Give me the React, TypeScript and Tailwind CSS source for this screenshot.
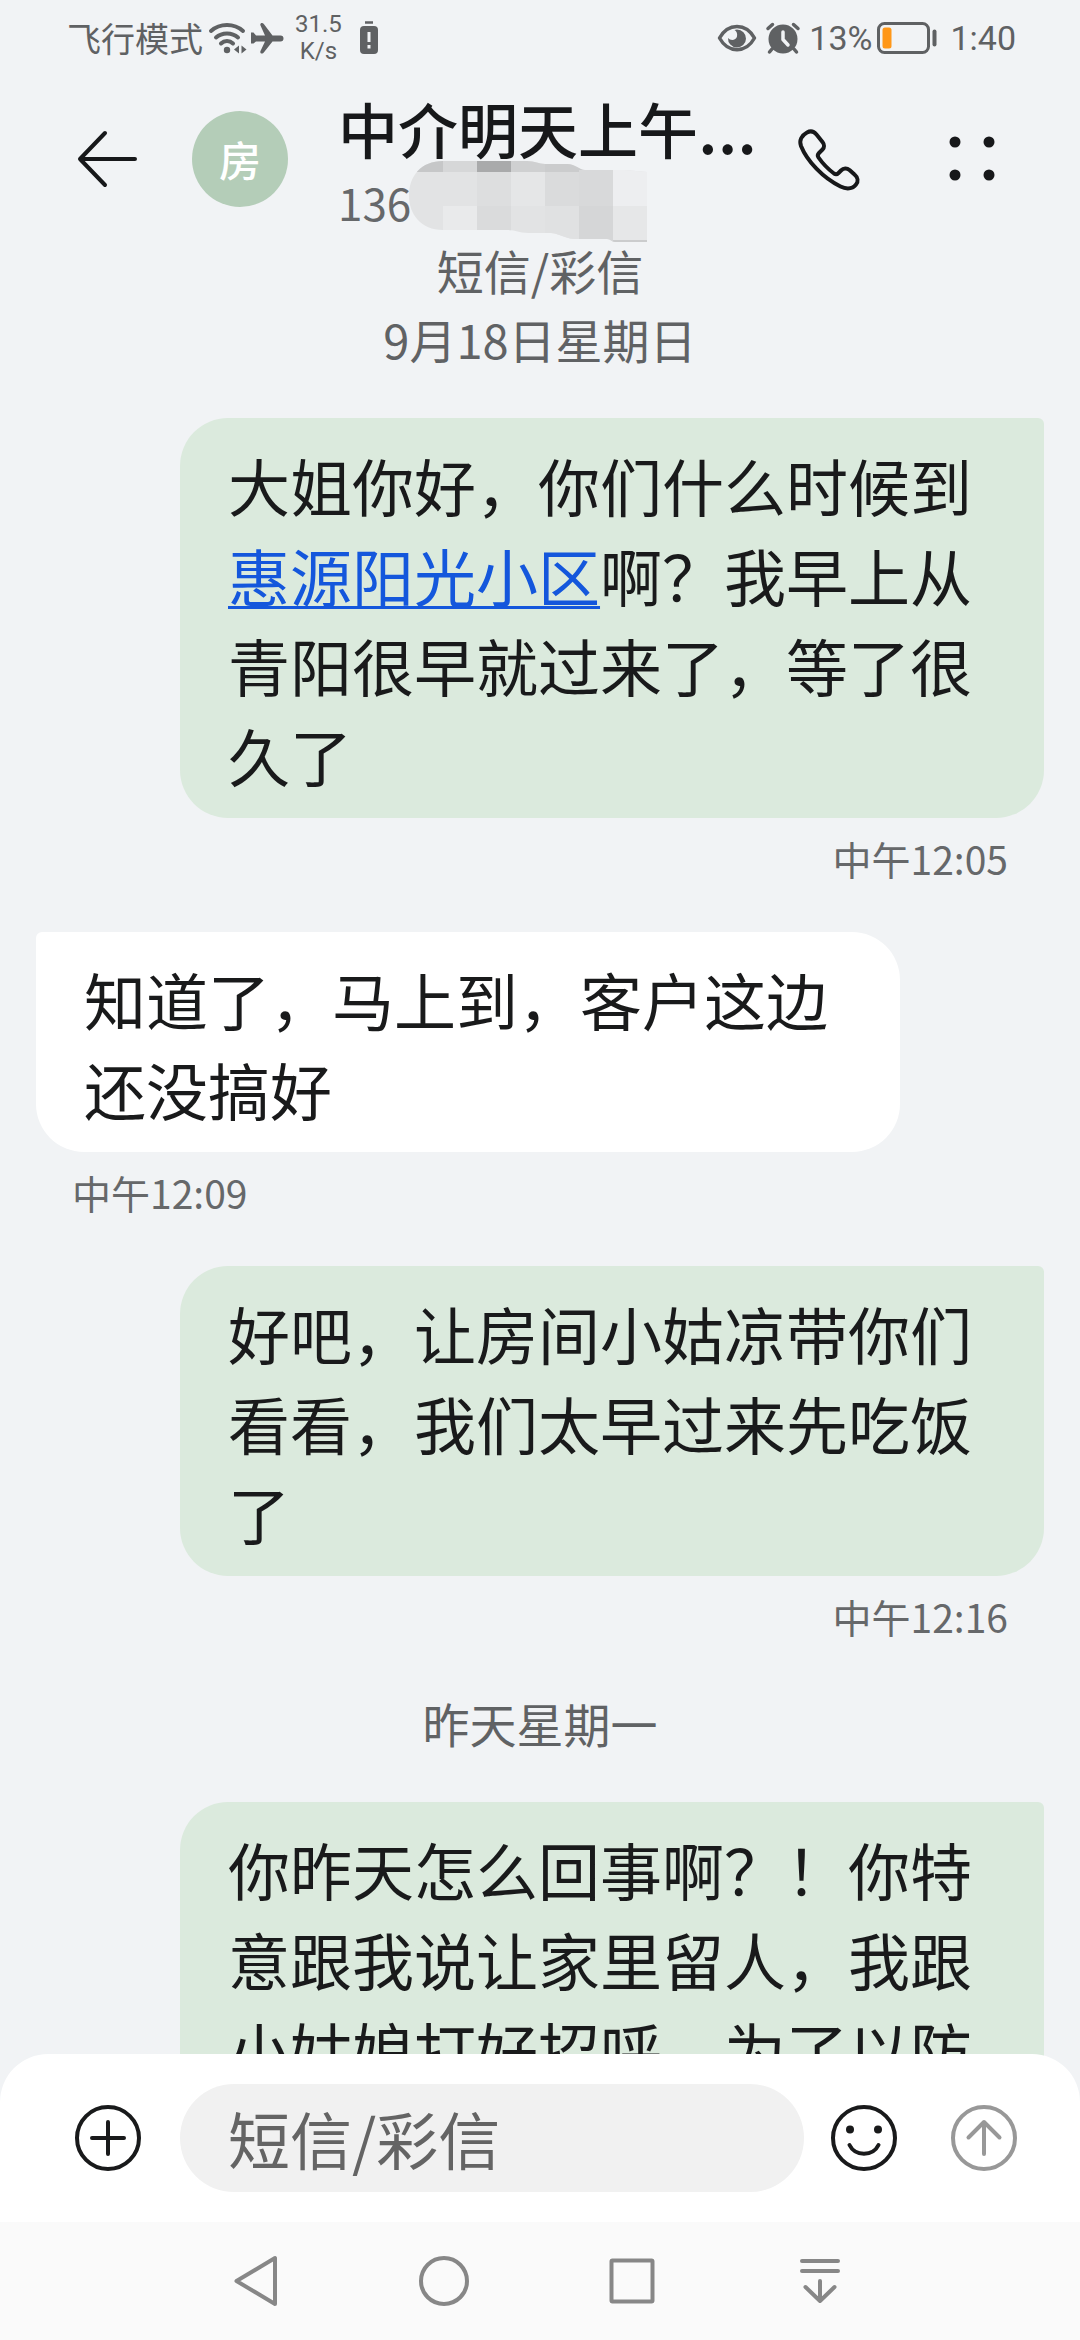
import { useState } from "react";
import type { ReactNode } from "react";

interface Message {
  id: number;
  mine: boolean;
  time?: string;
  body: ReactNode;
}

interface Day {
  label: string;
  messages: Message[];
}

const DAYS: Day[] = [
  {
    label: "9月18日星期日",
    messages: [
      {
        id: 1,
        mine: true,
        time: "中午12:05",
        body: (
          <>
            大姐你好，你们什么时候到
            <a
              href="#map"
              className="text-[#1457dc] underline decoration-[3px] underline-offset-[4px] [text-decoration-skip-ink:none]"
            >
              惠源阳光小区
            </a>
            啊？我早上从青阳很早就过来了，等了很久了
          </>
        ),
      },
      {
        id: 2,
        mine: false,
        time: "中午12:09",
        body: "知道了，马上到，客户这边还没搞好",
      },
      {
        id: 3,
        mine: true,
        time: "中午12:16",
        body: "好吧，让房间小姑凉带你们看看，我们太早过来先吃饭了",
      },
    ],
  },
  {
    label: "昨天星期一",
    messages: [
      {
        id: 4,
        mine: true,
        body: "你昨天怎么回事啊？！你特意跟我说让家里留人，我跟小姑娘打好招呼，为了以防",
      },
    ],
  },
];

function StatusBar() {
  return (
    <div className="flex h-[76px] items-center justify-between pl-[67px] pr-[64px] text-[34px] leading-none text-[#5f6163]">
      <div className="flex items-center">
        <span>飞行模式</span>
        {/* Wi-Fi */}
        <svg className="ml-1 h-[34px] w-[42px]" viewBox="0 0 42 34" fill="none" stroke="currentColor" strokeWidth="4" strokeLinecap="round">
          <path d="M4 10C13 2 27 2 36 10" />
          <path d="M9 16.500C15 11 25 11 31 16.500" />
          <path d="M14 22.500C17.500 19 22.500 19 26 22.500" />
          <circle cx="20" cy="29" r="3.200" fill="currentColor" stroke="none" />
          <path d="M32 24.500v8l-5-4zM34.500 24.500v8l5-4z" fill="currentColor" stroke="none" />
        </svg>
        {/* Airplane */}
        <svg className="h-[34px] w-[36px]" viewBox="0 0 36 34" fill="currentColor">
          <path d="M2 11.500h2.500l2.500 3h9L11.500 4.500C10.500 2 13.500 1 15 3.200L23.500 14.500H31.500a3 3 0 0 1 0 6H23.500L15 31.300C13.500 33.500 10.500 32.500 11.500 30L16 20.500H7l-2.500 2H2z" />
        </svg>
        <span className="ml-2.5 text-center font-[Roboto] text-2xl leading-[27px]">
          31.5
          <br />
          K/s
        </span>
        {/* Low battery alert */}
        <svg className="ml-4.5 h-[34px] w-[18px]" viewBox="0 0 18 34">
          <path d="M5 1.500h8" stroke="currentColor" strokeWidth="2.500" />
          <rect y="5" width="18" height="28" rx="4" fill="currentColor" />
          <path d="M9 11v10M9 24v3.500" stroke="#f1f3f5" strokeWidth="3" />
        </svg>
      </div>
      <div className="flex items-center">
        {/* Eye comfort */}
        <svg className="h-[34px] w-[40px]" viewBox="0 0 40 34" fill="none">
          <path d="M2.500 17C11 1.500 29 1.500 37.500 17C29 32.500 11 32.500 2.500 17Z" stroke="currentColor" strokeWidth="3.500" strokeLinejoin="round" />
          <path d="M20 8.500a9 9 0 1 1-9 8.500c2.500 3 8 2.500 9-1.500c.600-3-.500-5.500-2.500-6.500z" fill="currentColor" />
        </svg>
        {/* Alarm */}
        <svg className="ml-2 h-[34px] w-[36px]" viewBox="0 0 36 34" fill="none" strokeLinecap="round">
          <circle cx="18" cy="18" r="14.500" fill="currentColor" />
          <path d="M3 7.500L7.500 3.500M33 7.500L28.500 3.500" stroke="currentColor" strokeWidth="3.500" />
          <path d="M7 28l-2.500 3M29 28l2.500 3" stroke="currentColor" strokeWidth="3.500" />
          <path d="M18 11v7.500l5 5.500" stroke="#f1f3f5" strokeWidth="3.500" strokeLinejoin="round" />
        </svg>
        <span className="ml-2 font-[Roboto]">13%</span>
        {/* Battery */}
        <svg className="ml-1 h-[34px] w-[62px]" viewBox="0 0 62 34" fill="none">
          <rect x="2.500" y="2.500" width="50" height="29" rx="6" stroke="currentColor" strokeWidth="3" />
          <rect x="6.500" y="6.500" width="9" height="21" rx="2.500" fill="#ff9718" />
          <rect x="56.500" y="8.500" width="4" height="17" rx="2" fill="currentColor" />
        </svg>
        <span className="ml-3 font-[Roboto]">1:40</span>
      </div>
    </div>
  );
}

// Pixel mask that hides the rest of the phone number
function NumberMask() {
  return (
    <svg className="-my-4 -ml-0.5 h-[84px] w-[240px]" viewBox="0 0 240 84" aria-hidden="true">
      <defs>
        <clipPath id="mask-shape">
          <path d="M34 1H118C126 1 130 4 136 4H158C167 4 170 10 176 10H216L238 12V82H206C202 82 202 79 198 79H168C154 79 152 73 140 73H120C108 73 108 70 98 70H34C12 70 0 54 0 36C0 16 12 1 34 1Z" />
        </clipPath>
      </defs>
      <g clipPath="url(#mask-shape)">
        <rect width="240" height="84" fill="#e2e3e4" />
        <rect width="34" height="12" fill="#c6c7c8" />
        <rect x="34" width="34" height="12" fill="#d6d7d8" />
        <rect x="68" width="34" height="12" fill="#a9aaab" />
        <rect x="102" width="34" height="12" fill="#cfd0d1" />
        <rect x="136" width="46" height="12" fill="#cbcccd" />
        <rect x="68" y="12" width="34" height="34" fill="#dddedf" />
        <rect x="102" y="12" width="34" height="34" fill="#e5e6e7" />
        <rect x="136" y="12" width="34" height="34" fill="#dadbdc" />
        <rect x="170" y="10" width="34" height="36" fill="#d8d9da" />
        <rect x="204" y="10" width="36" height="36" fill="#edeef0" />
        <rect x="34" y="46" width="34" height="34" fill="#e9eaeb" />
        <rect x="68" y="46" width="34" height="34" fill="#dadbdc" />
        <rect x="136" y="46" width="34" height="34" fill="#e0e1e2" />
        <rect x="170" y="46" width="34" height="38" fill="#d5d6d7" />
        <rect x="204" y="46" width="36" height="34" fill="#e6e7e8" />
        <rect x="204" y="80" width="36" height="4" fill="#cbcccd" />
      </g>
    </svg>
  );
}

function Header() {
  return (
    <header className="flex items-start px-[72px] pt-3 text-[#17181a]">
      <button aria-label="返回" className="mt-[35px]">
        <svg className="h-[72px] w-[72px]" viewBox="0 0 72 72" fill="none" stroke="currentColor" strokeWidth="4" strokeLinecap="round" strokeLinejoin="round">
          <path d="M33 10L8 36L33 62M8 36H63" />
        </svg>
      </button>
      <div className="ml-12 mt-[23px] flex size-24 shrink-0 items-center justify-center rounded-full bg-[#b4cdb8] text-[42px] font-medium leading-none text-white">
        房
      </div>
      <div className="ml-[50px] min-w-0 flex-1">
        <h1 className="h-20 whitespace-nowrap text-[60px] font-medium leading-[80px]">
          中介明天上午<span className="text-[66px] leading-none">...</span>
        </h1>
        <p className="mt-1 flex h-[60px] items-center text-[44px] leading-[60px] text-[#66686a]">
          136
          <NumberMask />
        </p>
      </div>
      <button aria-label="拨打电话" className="mt-[35px]">
        <svg className="h-[72px] w-[72px]" viewBox="0 0 72 72" fill="none" stroke="currentColor" strokeWidth="4" strokeLinejoin="round" strokeLinecap="round">
          <path d="M15 9.500C18.500 7.500 22 8.500 24.500 11.500L30.500 19C32.500 21.500 32.500 24.500 30.500 26.500L27 30C25.500 31.500 25.500 33 26.500 34.500C31 41 36 46 42 50.500C43.500 51.500 45 51.500 46.500 50L49 47.500C51.500 45 55 45 57.500 47L62.500 51.500C66 54.500 66.500 58.500 64 61.500C60.500 66 54.500 66.500 48.500 63.500C31 55 15 38 9 23C7 17.500 9.500 12.500 15 9.500Z" />
        </svg>
      </button>
      <button aria-label="更多" className="ml-[72px] mt-[35px]">
        <svg className="h-[72px] w-[72px]" viewBox="0 0 72 72" fill="currentColor">
          <circle cx="19" cy="19" r="5.500" />
          <circle cx="53" cy="19" r="5.500" />
          <circle cx="19" cy="52" r="5.500" />
          <circle cx="53" cy="52" r="5.500" />
        </svg>
      </button>
    </header>
  );
}

function Bubble({ message }: { message: Message }) {
  return (
    <div className={message.mine ? "flex flex-col items-end" : "flex flex-col items-start"}>
      <div
        className={
          message.mine
            ? "w-6/7 rounded-[48px] rounded-tr-md bg-[#dbeadd] px-12 pb-4.5 pt-5.5"
            : "w-6/7 rounded-[48px] rounded-tl-md bg-white px-12 pb-4.5 pt-5.5"
        }
      >
        <p className="text-[62px] leading-[90px] text-[#191a1b]">{message.body}</p>
      </div>
      {message.time && (
        <time className="mb-[38px] mt-1 px-9 text-[39px] leading-[72px] text-[#66686a]">
          {message.time}
        </time>
      )}
    </div>
  );
}

function Composer() {
  const [text, setText] = useState("");

  return (
    <footer className="relative -mt-12">
      <div className="flex items-center rounded-t-[48px] bg-white py-[30px] pl-[72px] pr-[60px] text-[#191a1b]">
        <button aria-label="添加" className="shrink-0">
          <svg className="h-[72px] w-[72px]" viewBox="0 0 72 72" fill="none" stroke="currentColor" strokeWidth="4" strokeLinecap="round">
            <circle cx="36" cy="36" r="31" />
            <path d="M36 20V52M20 36H52" />
          </svg>
        </button>
        <input
          aria-label="短信/彩信"
          placeholder="短信/彩信"
          value={text}
          onChange={(e) => setText(e.target.value)}
          className="ml-9 h-[108px] min-w-0 flex-1 rounded-full bg-[#f1f1f1] px-12 text-[62px] outline-none placeholder:text-[#646464]"
        />
        <button aria-label="表情" className="ml-6 shrink-0">
          <svg className="h-[72px] w-[72px]" viewBox="0 0 72 72" fill="none" stroke="currentColor" strokeWidth="4" strokeLinecap="round">
            <circle cx="36" cy="36" r="31" />
            <circle cx="22" cy="27.500" r="4" fill="currentColor" stroke="none" />
            <circle cx="50" cy="27.500" r="4" fill="currentColor" stroke="none" />
            <path d="M21.500 43C27 54.500 45 54.500 50.500 43" />
          </svg>
        </button>
        <button aria-label="发送" className="ml-12 shrink-0 text-[#989898]">
          <svg className="h-[72px] w-[72px]" viewBox="0 0 72 72" fill="none" stroke="currentColor" strokeWidth="4" strokeLinecap="round" strokeLinejoin="round">
            <circle cx="36" cy="36" r="31" />
            <path d="M36 52V20M20.500 35.500L36 20L51.500 35.500" />
          </svg>
        </button>
      </div>
      <NavBar />
    </footer>
  );
}

function NavBar() {
  return (
    <nav className="flex h-[118px] items-center justify-center gap-[116px] bg-[#fafafa] pr-1 text-[#878787]">
      <button aria-label="后退">
        <svg className="h-[72px] w-[72px]" viewBox="0 0 72 72" fill="none" stroke="currentColor" strokeWidth="4" strokeLinejoin="round">
          <path d="M55 13V59L16.500 36Z" />
        </svg>
      </button>
      <button aria-label="主屏幕">
        <svg className="h-[72px] w-[72px]" viewBox="0 0 72 72" fill="none" stroke="currentColor" strokeWidth="4">
          <circle cx="36" cy="36" r="23" />
        </svg>
      </button>
      <button aria-label="最近任务">
        <svg className="h-[72px] w-[72px]" viewBox="0 0 72 72" fill="none" stroke="currentColor" strokeWidth="4" strokeLinejoin="round">
          <rect x="15.500" y="15.500" width="41" height="41" rx="1" />
        </svg>
      </button>
      <button aria-label="通知栏">
        <svg className="h-[72px] w-[72px]" viewBox="0 0 72 72" fill="none" stroke="currentColor" strokeWidth="4" strokeLinecap="round" strokeLinejoin="round">
          <path d="M18 16H54M18 26H54M36 36V56M21.500 42L36 56L50.500 42" />
        </svg>
      </button>
    </nav>
  );
}

export default function App() {
  return (
    <div
      lang="zh-CN"
      className="flex h-screen flex-col bg-[#f1f3f5] font-['Noto_Sans_CJK_SC',sans-serif]"
    >
      <StatusBar />
      <Header />
      <main className="min-h-0 flex-1 overflow-hidden px-9 pt-0.5">
        <p className="text-center text-[47px] leading-[72px] text-[#606264]">短信/彩信</p>
        {DAYS.map((day) => (
          <section key={day.label}>
            <h2 className="pb-[46px] text-center text-[47px] leading-[66px] text-[#606264]">
              {day.label}
            </h2>
            {day.messages.map((message) => (
              <Bubble key={message.id} message={message} />
            ))}
          </section>
        ))}
      </main>
      <Composer />
    </div>
  );
}
